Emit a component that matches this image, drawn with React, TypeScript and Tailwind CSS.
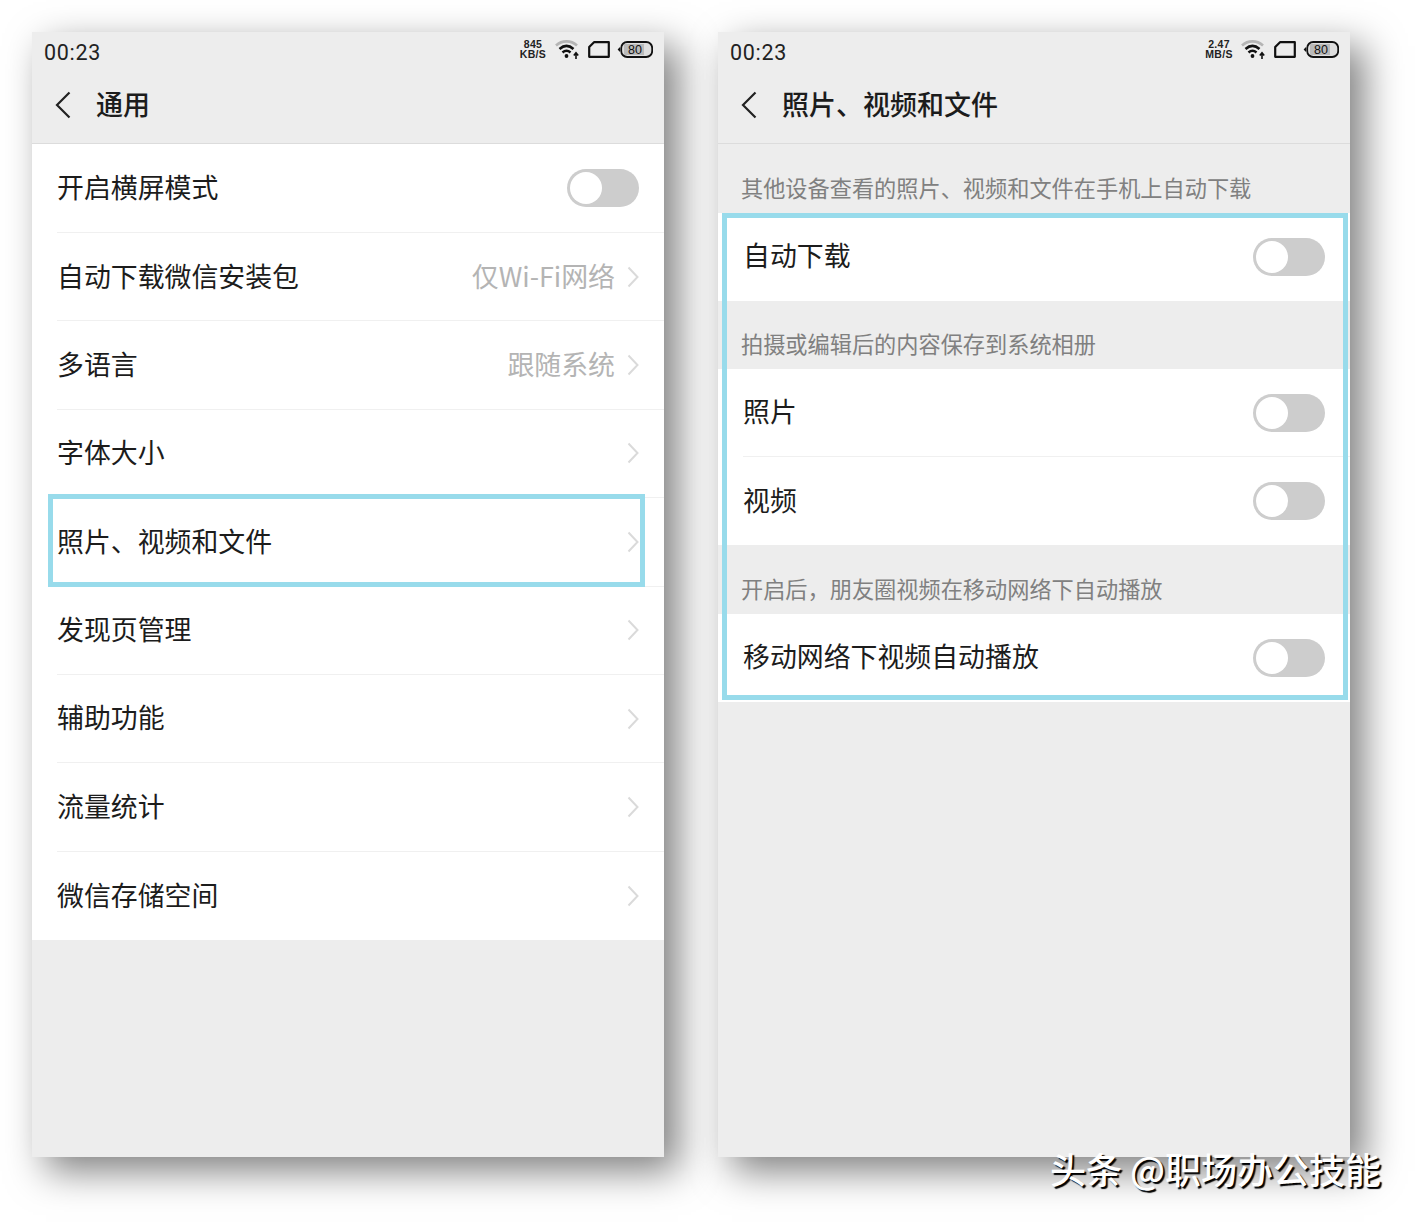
import React from 'react';

const font = { fontFamily: '"Noto Sans CJK SC", sans-serif' };

const Toggle = () => (
  <div className="flex h-[38px] w-[72px] items-center rounded-full bg-[#cdcdcd] pl-[3px]">
    <div className="h-[32px] w-[32px] rounded-full bg-white" />
  </div>
);

const Chevron = () => (
  <svg width="12" height="24" viewBox="0 0 12 24" fill="none" className="ml-[12px]">
    <path d="M1.5 2.5 L10.5 12 L1.5 21.5" stroke="#dadada" strokeWidth="2" />
  </svg>
);

const StatusBar = ({ speed, unit }: { speed: string; unit: string }) => (
  <div className="flex h-[40px] items-center justify-between pl-3 pr-[11px]">
    <span className="pt-[3px] font-['Roboto',sans-serif] text-[21.5px] tracking-[0.7px] text-[#222]">00:23</span>
    <div className="flex -translate-y-[3px] items-center">
      <div className="flex w-[26px] flex-col items-center font-['Liberation_Sans',sans-serif] text-[10.5px] leading-[10px] font-bold tracking-[0.3px] text-[#222]">
        <span>{speed}</span>
        <span>{unit}</span>
      </div>
      <svg width="26" height="22" viewBox="0 0 26 22" fill="none" className="ml-[8px]">
        <path d="M2 7.5 C8 2 17 2 23 7.5" stroke="#b5b5b5" strokeWidth="2.6" />
        <path d="M5.5 11 C10 7 15 7 19.5 11" stroke="#111" strokeWidth="2.6" />
        <path d="M8.5 14.5 C11 12.3 14 12.3 16.5 14.5" stroke="#111" strokeWidth="2.6" />
        <circle cx="12.5" cy="18" r="1.9" fill="#111" />
        <path d="M22 21 V16 M19.8 17.5 L22 14.8 L24.2 17.5" stroke="#111" strokeWidth="1.6" />
      </svg>
      <svg width="22" height="17" viewBox="0 0 22 17" fill="none" className="ml-[8px]">
        <path d="M6 1.2 H20.8 V15.8 H1.2 V6 Z" stroke="#111" strokeWidth="2.2" strokeLinejoin="round" />
      </svg>
      <svg width="36" height="17" viewBox="0 0 36 17" fill="none" className="ml-[7px]">
        <path d="M3 6 L0.6 8.5 L3 11 Z" fill="#111" />
        <rect x="4.2" y="1" width="31" height="15" rx="6" fill="#dedede" stroke="#111" strokeWidth="1.8" />
        <path d="M7 3 H27 V14 H7 Z" fill="#bababa" />
        <text x="18" y="13" textAnchor="middle" fontSize="12.5" fontFamily="Liberation Sans" fill="#111">80</text>
      </svg>
    </div>
  </div>
);

const Header = ({ title }: { title: string }) => (
  <div className="flex h-[72px] items-center border-b border-[#dcdcdc] pb-[6px]">
    <svg width="16" height="28" viewBox="0 0 16 28" fill="none" className="ml-6 -translate-x-[1px]">
      <path d="M14.5 1.5 L2 14 L14.5 26.5" stroke="#222" strokeWidth="2.2" />
    </svg>
    <span className="ml-6 text-[27px] font-medium text-[#1c1c1c]">{title}</span>
  </div>
);

const Row = ({
  label,
  value,
  arrow,
  last,
  height = 'h-[88.4px]',
}: {
  label: string;
  value?: string;
  arrow?: boolean;
  last?: boolean;
  height?: string;
}) => (
  <div className={`${height} bg-white pl-[25px]`}>
    <div
      className={`flex h-full items-center justify-between pr-[25px] ${last ? '' : 'border-b border-[#f0f0f0]'}`}
    >
      <span className="pb-[2px] text-[26.9px] text-[#1c1c1c]">{label}</span>
      {arrow ? (
        <div className="flex items-center">
          {value && <span className="pb-[2px] text-[26.9px] text-[#b4b4b4]">{value}</span>}
          <Chevron />
        </div>
      ) : (
        <Toggle />
      )}
    </div>
  </div>
);

const SectionLabel = ({ text }: { text: string }) => (
  <div className="flex h-[68.5px] items-start pl-[23px] pt-[26.5px] text-[22.2px] leading-[32px] text-[#808080]">
    {text}
  </div>
);

const generalRows = [
  { label: '自动下载微信安装包', value: '仅Wi-Fi网络' },
  { label: '多语言', value: '跟随系统' },
  { label: '字体大小' },
  { label: '照片、视频和文件' },
  { label: '发现页管理' },
  { label: '辅助功能' },
  { label: '流量统计' },
  { label: '微信存储空间' },
];

const Phone = ({ children }: { children: React.ReactNode }) => (
  <div className="relative h-[1125px] w-[632px] bg-[#ededed] shadow-[14px_14px_36px_rgba(0,0,0,0.5)]">
    {children}
  </div>
);

const App: React.FC = () => {
  return (
    <div className="relative flex h-[1222px] w-[1415px] gap-[54px] overflow-hidden bg-white pl-8 pt-8" style={font}>
      <Phone>
        <StatusBar speed="845" unit="KB/S" />
        <Header title="通用" />
        <div className="bg-white pt-[0.6px]">
          <Row label="开启横屏模式" />
          {generalRows.map((r, i) => (
            <Row key={r.label} label={r.label} value={r.value} arrow last={i === generalRows.length - 1} />
          ))}
        </div>
        {/* highlight frame */}
        <div className="absolute left-[16px] top-[462px] h-[93px] w-[597px] border-[5px] border-[#98dbeb]" />
      </Phone>

      <Phone>
        <StatusBar speed="2.47" unit="MB/S" />
        <Header title="照片、视频和文件" />
        <SectionLabel text="其他设备查看的照片、视频和文件在手机上自动下载" />
        <Row label="自动下载" height="h-[88px]" last />
        <SectionLabel text="拍摄或编辑后的内容保存到系统相册" />
        <Row label="照片" height="h-[88px]" />
        <Row label="视频" height="h-[88px]" last />
        <SectionLabel text="开启后，朋友圈视频在移动网络下自动播放" />
        <Row label="移动网络下视频自动播放" height="h-[88px]" last />
        <div className="absolute left-[4px] top-[181px] h-[487px] w-[626px] border-[5px] border-[#98dbeb]" />
      </Phone>

      {/* watermark */}
      <div className="absolute left-[1050px] top-[1143px] text-[36px] leading-[50px] font-medium text-white [text-shadow:2px_2px_1px_#000]">
        头条 @职场办公技能
      </div>
    </div>
  );
};

export default App;
